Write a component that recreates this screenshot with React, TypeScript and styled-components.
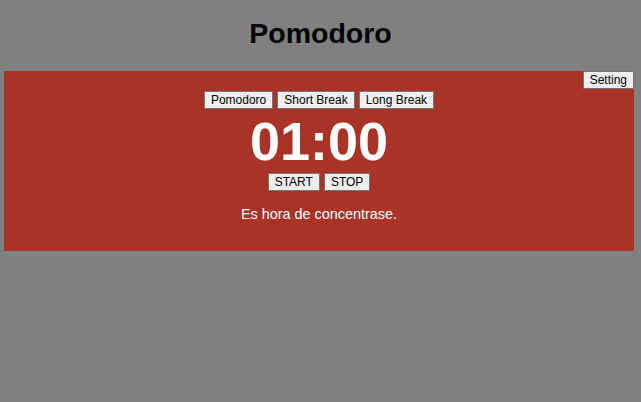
import React from "react";
import styled, { createGlobalStyle } from "styled-components";

const Global = createGlobalStyle`
  html, body {
    margin: 0;
    padding: 0;
    background: #808080;
    font-family: "Liberation Sans", Arial, sans-serif;
  }
`;

const Title = styled.h1`
  margin: 17px 0 22px;
  font-size: 28.5px;
  line-height: 32px;
  font-weight: bold;
  text-align: center;
  color: #000;
`;

const Panel = styled.section`
  margin: 0 7px 0 4px;
  background: #a93327;
  padding-bottom: 28px;
  display: flex;
  flex-direction: column;
`;

const Row = styled.div<{ $justify?: string; $top?: number }>`
  display: flex;
  justify-content: ${(p) => p.$justify ?? "center"};
  gap: 4px;
  margin-top: ${(p) => p.$top ?? 0}px;
`;

const Button = styled.button`
  font-family: "Liberation Sans", Arial, sans-serif;
  font-size: 12px;
  line-height: 14px;
  height: 18px;
  padding: 1px 6px;
  border: 1px solid #767676;
  background: #efefef;
  color: #000;
  border-radius: 0;
  cursor: pointer;
`;

const Timer = styled.div`
  font-size: 54px;
  line-height: 64px;
  font-weight: bold;
  color: #fff;
  text-align: center;
`;

const Message = styled.p`
  margin: 15px 0 0;
  font-size: 14.4px;
  line-height: 17px;
  color: #fff;
  text-align: center;
`;

export default function App() {
  return (
    <>
      <Global />
      <Title>Pomodoro</Title>
      <Panel>
        <Row $justify="flex-end">
          <Button>Setting</Button>
        </Row>
        <Row $top={2}>
          <Button>Pomodoro</Button>
          <Button>Short Break</Button>
          <Button>Long Break</Button>
        </Row>
        <Timer>01:00</Timer>
        <Row>
          <Button>START</Button>
          <Button>STOP</Button>
        </Row>
        <Message>Es hora de concentrase.</Message>
      </Panel>
    </>
  );
}
